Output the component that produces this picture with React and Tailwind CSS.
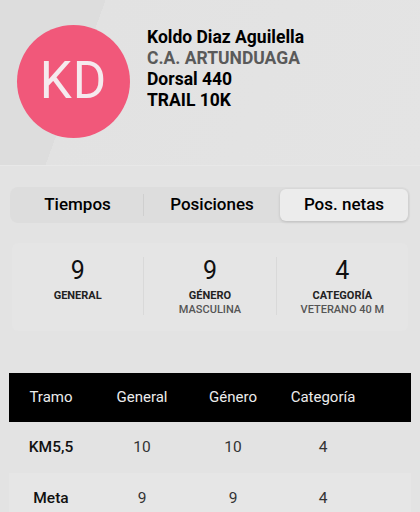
import React from "react";

const stats = [
  { value: "9", label: "GENERAL", sub: "" },
  { value: "9", label: "GÉNERO", sub: "MASCULINA" },
  { value: "4", label: "CATEGORÍA", sub: "VETERANO 40 M" },
];

const rows = [
  { tramo: "KM5,5", general: "10", genero: "10", categoria: "4" },
  { tramo: "Meta", general: "9", genero: "9", categoria: "4" },
];

const App = () => {
  return (
    <div
      className="w-[420px] h-[512px] overflow-hidden bg-[#e3e3e3] text-black"
      style={{ fontFamily: "Roboto, 'Liberation Sans', sans-serif" }}
    >
      {/* Header */}
      <div className="h-[166px] bg-[linear-gradient(110deg,#dddddd_0%,#dddddd_22%,#e2e2e2_22%,#e4e4e4_100%)] border-b border-[#e8e8e8] flex items-start pl-[17px] pt-[25px]">
        <div className="w-[113px] h-[113px] rounded-full bg-[#f1587a] flex items-center justify-center shrink-0">
          <span className="text-[51px] text-[#f5eaee] font-normal tracking-[1px]">KD</span>
        </div>
        <div className="ml-[17px] mt-[2px] text-[17.5px] leading-[21px] font-bold">
          <div>Koldo Diaz Aguilella</div>
          <div className="text-[#5a5a5a]">C.A. ARTUNDUAGA</div>
          <div>Dorsal 440</div>
          <div>TRAIL 10K</div>
        </div>
      </div>

      {/* Tabs */}
      <div className="mx-[10px] mt-[21px] h-[36px] rounded-lg bg-[#dddddd] flex items-center p-[2px] text-[17px] font-medium">
        <div className="w-[131px] text-center">Tiempos</div>
        <div className="w-px h-[22px] bg-[#cfcfcf]"></div>
        <div className="w-[136px] text-center">Posiciones</div>
        <div className="flex-1 h-full rounded-md bg-[#ececec] shadow-[0_1px_3px_rgba(0,0,0,0.15)] flex items-center justify-center">
          Pos. netas
        </div>
      </div>

      {/* Stats */}
      <div className="mx-[12px] mt-[20px] h-[88px] rounded-md bg-[#e5e5e5] flex items-start pt-[14px]">
        {stats.map((s, i) => (
          <div
            key={s.label}
            className={
              "flex-1 flex flex-col items-center h-[58px] " +
              (i > 0 ? "border-l border-[#d9d9d9]" : "")
            }
          >
            <div className="text-[25px] leading-[28px] text-[#111]">{s.value}</div>
            <div className="text-[11px] leading-[14px] font-bold text-[#222] mt-[4px]">{s.label}</div>
            {s.sub && (
              <div className="text-[11px] leading-[14px] text-[#555] font-medium">{s.sub}</div>
            )}
          </div>
        ))}
      </div>

      {/* Table */}
      <div className="mx-[9px] mt-[42px]">
        <div className="h-[49px] bg-black text-[#ececec] text-[15px] flex items-center">
          <div className="w-[84px] text-center">Tramo</div>
          <div className="w-[98px] text-center">General</div>
          <div className="w-[84px] text-center">Género</div>
          <div className="w-[96px] text-center">Categoría</div>
        </div>
        {rows.map((r, i) => (
          <div
            key={r.tramo}
            className={
              "h-[51px] flex items-center text-[15.5px] " +
              (i % 2 === 1 ? "bg-[#e6e6e6]" : "")
            }
          >
            <div className="w-[84px] text-center font-medium text-[#111]">{r.tramo}</div>
            <div className="w-[98px] text-center text-[#333]">{r.general}</div>
            <div className="w-[84px] text-center text-[#333]">{r.genero}</div>
            <div className="w-[96px] text-center text-[#333]">{r.categoria}</div>
          </div>
        ))}
      </div>
    </div>
  );
};

export default App;
